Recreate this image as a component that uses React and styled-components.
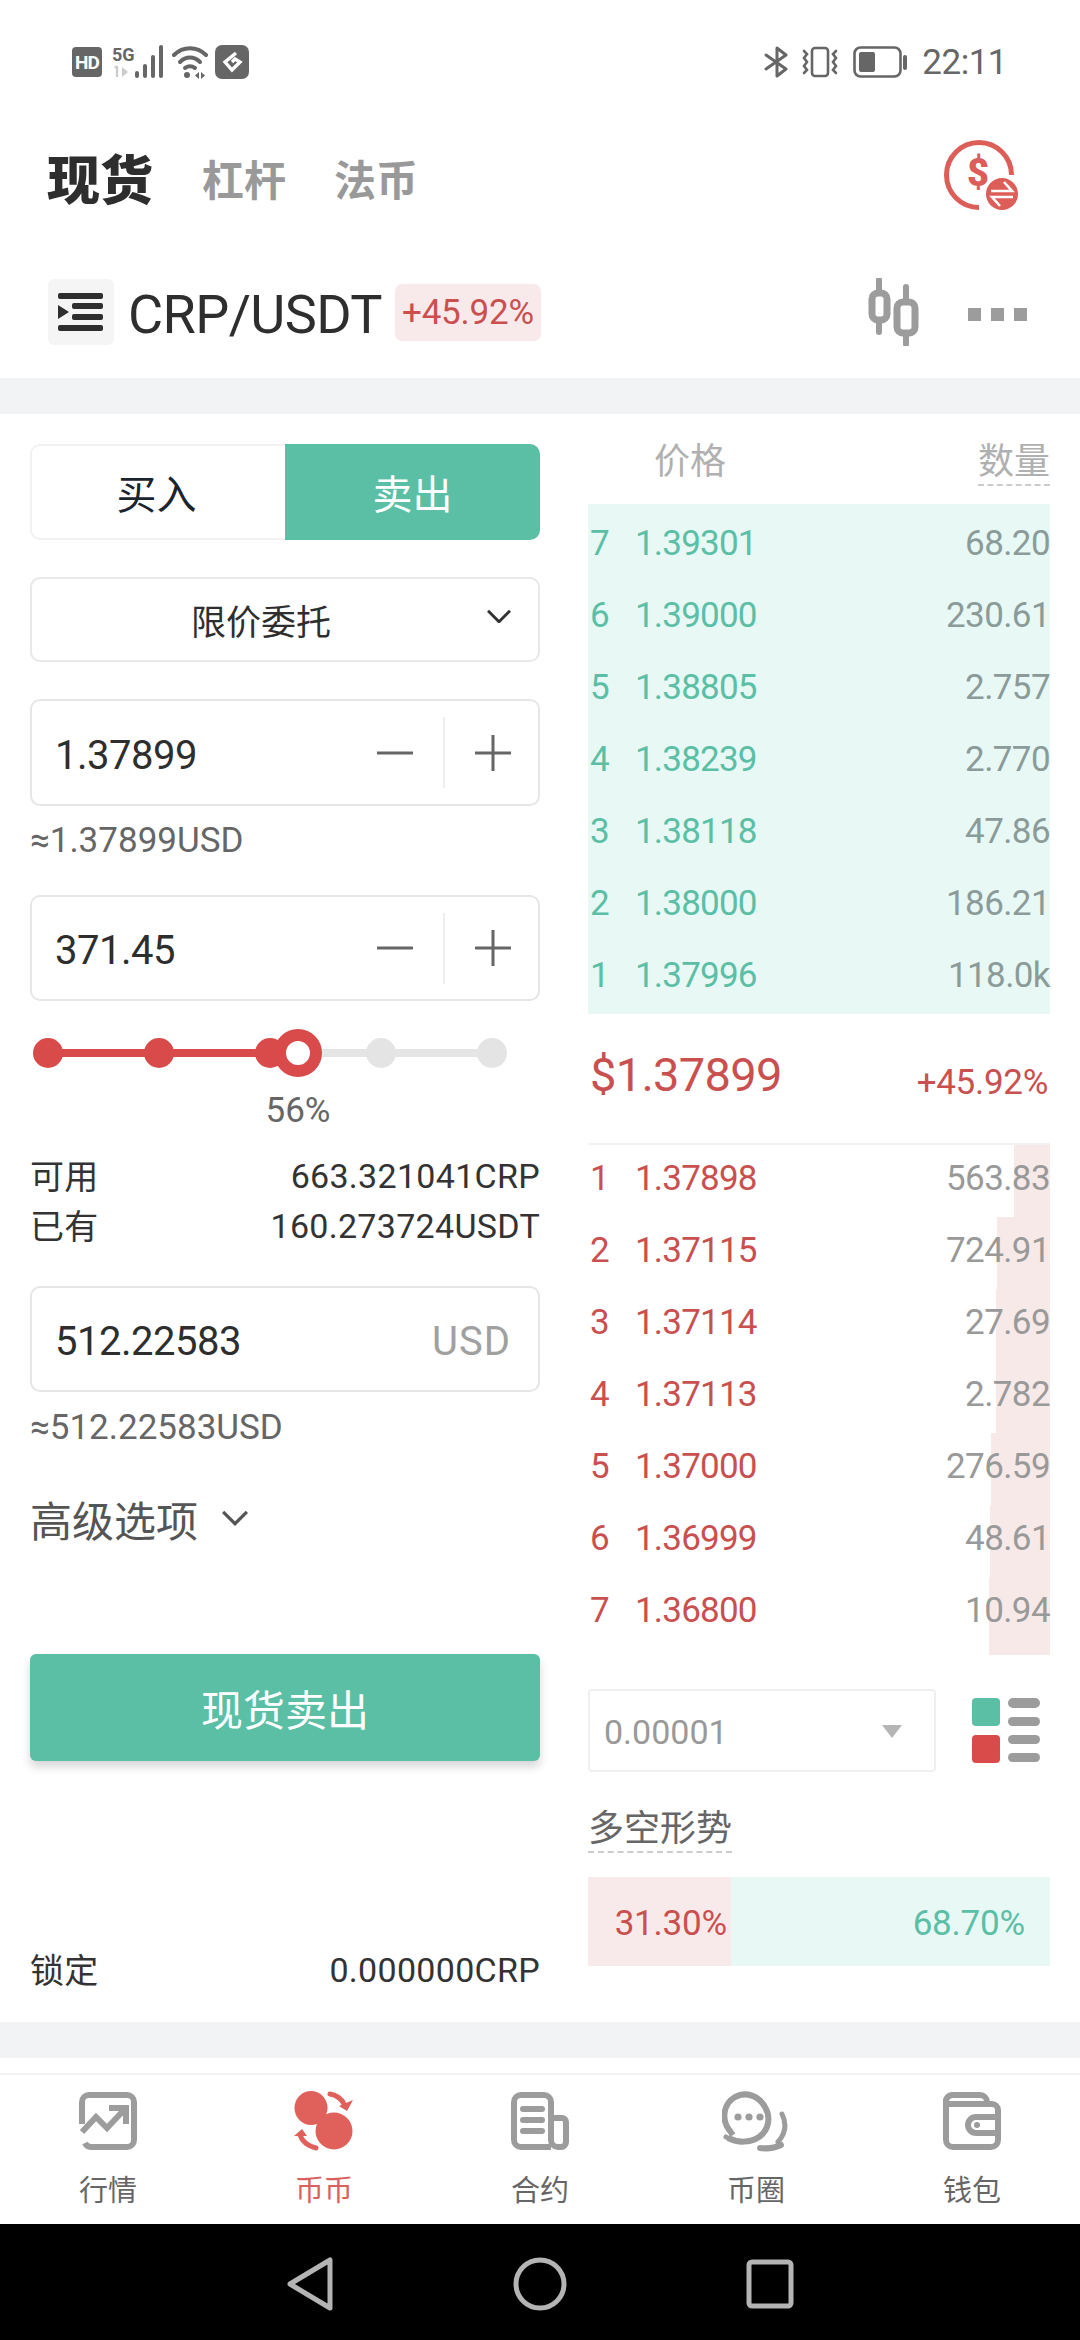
import React from 'react';
import styled, { createGlobalStyle } from 'styled-components';

const GREEN = '#5bbfa5';
const RED = '#c9504f';
const DOT_RED = '#d94a4a';

const GlobalStyle = createGlobalStyle`
    html, body { margin: 0; padding: 0; background: #fff; }
    * { box-sizing: border-box; }
    body { font-family: Roboto, "Noto Sans CJK SC", sans-serif; }
`;

const Page = styled.div`
    width: 1080px;
    height: 2340px;
    display: flex;
    flex-direction: column;
    overflow: hidden;
    background: #fff;
    color: #333;
`;

/* status bar */
const StatusBar = styled.div`
    height: 90px;
    padding: 44px 73px 0 72px;
    display: flex;
    justify-content: space-between;
    align-items: flex-start;
    flex: none;
`;
const StatusGroup = styled.div`
    display: flex;
    align-items: center;
    height: 36px;
`;
const StatusItem = styled.span`
    display: flex;
    margin-left: ${(p) => p.$ml}px;
`;
const HdBadge = styled.span`
    width: 30px;
    height: 30px;
    border-radius: 4px;
    background: #666;
    color: #fff;
    font-size: 19px;
    font-weight: 700;
    letter-spacing: -1px;
    display: flex;
    align-items: center;
    justify-content: center;
`;
const Clock = styled.span`
    font-size: 35px;
    letter-spacing: -0.5px;
    color: #666;
    margin-left: 15px;
`;

/* top tabs */
const TabsBar = styled.div`
    height: 174px;
    padding: 0 62px 0 47px;
    display: flex;
    align-items: center;
    flex: none;
`;
const MainTab = styled.span`
    font-size: 53px;
    font-weight: 900;
    color: #2e2e2e;
    margin-right: 49px;
`;
const SubTab = styled.span`
    font-size: 42px;
    font-weight: 700;
    color: #999;
    margin-right: 48px;
`;
const TabsIcon = styled.div`
    margin-left: auto;
    margin-bottom: 5px;
    display: flex;
`;

/* pair row */
const PairRow = styled.div`
    height: 114px;
    padding: 0 53px 18px 48px;
    display: flex;
    align-items: center;
    flex: none;
`;
const MenuBox = styled.div`
    width: 66px;
    height: 66px;
    border-radius: 6px;
    background: #f5f5f5;
    display: flex;
    align-items: center;
    justify-content: center;
`;
const PairName = styled.span`
    font-size: 54px;
    color: #2e2e2e;
    margin-left: 14px;
    padding-top: 4px;
    letter-spacing: -0.6px;
`;
const ChangeBadge = styled.span`
    height: 57px;
    width: 146px;
    margin-left: 13px;
    border-radius: 7px;
    background: #f8eaea;
    color: ${RED};
    font-size: 35px;
    letter-spacing: -0.2px;
    display: flex;
    align-items: center;
    justify-content: center;
`;
const PairActions = styled.div`
    margin-left: auto;
    display: flex;
    align-items: center;
    gap: 48px;
`;
const DotsRow = styled.div`
    display: flex;
    gap: 10px;
    margin-top: 4px;
`;
const SquareDot = styled.span`
    width: 13px;
    height: 13px;
    background: #9c9c9c;
`;

const Band = styled.div`
    height: 36px;
    background: #f2f3f5;
    flex: none;
`;

/* main area */
const Main = styled.div`
    height: 1608px;
    flex: none;
    padding: 0 30px;
    display: flex;
    gap: 48px;
`;
const LeftCol = styled.div`
    width: 510px;
    display: flex;
    flex-direction: column;
    padding: 30px 0 27px;
`;
const RightCol = styled.div`
    width: 462px;
    display: flex;
    flex-direction: column;
`;

const Toggle = styled.div`
    display: flex;
    height: 96px;
    flex: none;
`;
const ToggleBtn = styled.div`
    width: 50%;
    display: flex;
    align-items: center;
    justify-content: center;
    font-size: 40px;
    padding-right: ${(p) => (p.$active ? 0 : 4)}px;
    border: ${(p) => (p.$active ? 'none' : '2px solid #f1f1f1')};
    border-right: none;
    border-radius: ${(p) => (p.$active ? '0 10px 10px 0' : '10px 0 0 10px')};
    background: ${(p) => (p.$active ? GREEN : '#fff')};
    color: ${(p) => (p.$active ? '#fff' : '#1c2430')};
`;
const SelectBox = styled.div`
    height: 85px;
    margin-top: 37px;
    flex: none;
    position: relative;
    border: 2px solid #e8e8e8;
    border-radius: 10px;
    display: flex;
    align-items: center;
    justify-content: center;
    font-size: 35px;
    color: #2e2e2e;
    padding-right: 48px;
`;
const SelectChevron = styled.span`
    position: absolute;
    right: 27px;
    top: 30px;
    display: flex;
`;
const InputBox = styled.div`
    height: ${(p) => p.$h || 107}px;
    margin-top: ${(p) => p.$mt}px;
    flex: none;
    border: 2px solid #e6e6e6;
    border-radius: 10px;
    display: flex;
    align-items: center;
    padding: 0 27px 0 23px;
`;
const InputValue = styled.span`
    font-size: 40px;
    letter-spacing: -0.5px;
    color: #2e2e2e;
    flex: 1;
    padding-top: 5px;
`;
const InputSuffix = styled.span`
    font-size: 40px;
    letter-spacing: 1px;
    color: #a0a0a0;
    padding-top: 5px;
`;
const StepBtn = styled.span`
    width: 36px;
    height: 36px;
    display: flex;
`;
const StepDivider = styled.span`
    width: 2px;
    height: 71px;
    background: #eee;
    margin: 0 30px;
`;
const Hint = styled.div`
    font-size: 35px;
    line-height: 34px;
    color: #666;
    margin-top: ${(p) => p.$mt}px;
    flex: none;
`;

const Slider = styled.div`
    position: relative;
    height: 48px;
    margin-top: 28px;
    padding: 9px 33px 9px 3px;
    display: flex;
    justify-content: space-between;
    flex: none;
`;
const SliderTrack = styled.div`
    position: absolute;
    left: 18px;
    right: 48px;
    top: 20px;
    height: 8px;
    background: #e5e5e5;
`;
const SliderFill = styled.div`
    height: 100%;
    background: ${DOT_RED};
`;
const SliderDot = styled.span`
    position: relative;
    width: 30px;
    height: 30px;
    border-radius: 50%;
    background: ${(p) => (p.$on ? DOT_RED : '#e4e4e4')};
`;
const SliderThumb = styled.span`
    position: absolute;
    top: 0;
    width: 48px;
    height: 48px;
    margin-left: -24px;
    border-radius: 50%;
    border: 12px solid ${DOT_RED};
    background: #fff;
`;
const PercentLabel = styled.div`
    width: 536px;
    margin-top: 16px;
    text-align: center;
    font-size: 35px;
    line-height: 36px;
    color: #666;
    flex: none;
`;
const InfoRow = styled.div`
    display: flex;
    justify-content: space-between;
    align-items: center;
    height: 50px;
    font-size: 34px;
    letter-spacing: 0.3px;
    color: #333;
    flex: none;
`;
const InfoLabel = styled.span`
    margin-top: -3px;
`;
const InfoList = styled.div`
    margin-top: 22px;
`;
const Advanced = styled.div`
    margin-top: 48px;
    height: 50px;
    display: flex;
    align-items: center;
    gap: 24px;
    font-size: 42px;
    color: #555;
    flex: none;
`;
const SubmitBtn = styled.div`
    margin-top: 111px;
    height: 107px;
    flex: none;
    border-radius: 6px;
    background: ${GREEN};
    color: #fff;
    font-size: 42px;
    display: flex;
    align-items: center;
    justify-content: center;
    box-shadow: 0 6px 10px rgba(0, 0, 0, 0.16);
`;
const LockedRow = styled(InfoRow)`
    margin-top: auto;
`;

/* order book */
const BookHead = styled.div`
    height: 90px;
    flex: none;
    padding: 26px 0 0 66px;
    display: flex;
    justify-content: space-between;
    align-items: flex-start;
    font-size: 36px;
    line-height: 44px;
    color: #b0b0b0;
`;
const DashedLabel = styled.span`
    border-bottom: 2px dashed #ccc;
`;
const Asks = styled.div`
    height: 510px;
    padding: 3px 0;
    background: #e8f8f5;
    flex: none;
`;
const Bids = styled.div`
    height: 510px;
    padding-bottom: 6px;
    flex: none;
`;
const BookRow = styled.div`
    position: relative;
    height: 72px;
    display: flex;
    align-items: center;
    font-size: 35px;
    padding-bottom: ${(p) => (p.$side === 'bid' ? 6 : 0)}px;
    color: ${(p) => (p.$side === 'bid' ? RED : GREEN)};
`;
const DepthBar = styled.span`
    position: absolute;
    right: 0;
    top: 0;
    bottom: ${(p) => (p.$last ? -6 : 0)}px;
    background: #f7e9e8;
`;
const RowIndex = styled.span`
    width: 47px;
    padding-left: 2px;
    position: relative;
`;
const RowPrice = styled.span`
    position: relative;
    letter-spacing: -0.8px;
`;
const RowQty = styled.span`
    position: relative;
    margin-left: auto;
    letter-spacing: -0.6px;
    color: ${(p) => (p.$side === 'bid' ? '#999' : '#8b9b99')};
`;
const MidPrice = styled.div`
    height: 131px;
    flex: none;
    border-bottom: 2px solid #f2f2f2;
    display: flex;
    justify-content: space-between;
    align-items: center;
    color: ${RED};
    padding-bottom: 8px;
`;
const MidValue = styled.span`
    font-size: 47px;
    letter-spacing: -0.7px;
    padding-left: 2px;
`;
const MidChange = styled.span`
    font-size: 35px;
    letter-spacing: -0.3px;
    padding: 16px 2px 0 0;
`;
const DepthTools = styled.div`
    margin-top: 34px;
    display: flex;
    align-items: center;
    justify-content: space-between;
    padding-right: 10px;
    flex: none;
`;
const DepthSelect = styled.div`
    width: 348px;
    height: 83px;
    border: 2px solid #f0f0f0;
    border-radius: 4px;
    padding: 2px 32px 0 14px;
    display: flex;
    align-items: center;
    justify-content: space-between;
    font-size: 34px;
    color: #999;
`;
const Caret = styled.span`
    width: 0;
    height: 0;
    border-left: 10px solid transparent;
    border-right: 10px solid transparent;
    border-top: 13px solid #b5b5b5;
`;
const RatioTitleRow = styled.div`
    margin-top: 35px;
    display: flex;
    flex: none;
`;
const RatioTitle = styled.span`
    font-size: 36px;
    line-height: 44px;
    color: #666;
    border-bottom: 2px dashed #ccc;
`;
const RatioBar = styled.div`
    margin-top: 24px;
    height: 89px;
    display: flex;
    flex: none;
    font-size: 35px;
    letter-spacing: -0.2px;
`;
const RatioPart = styled.div`
    display: flex;
    align-items: center;
    justify-content: flex-end;
    background: ${(p) => (p.$long ? '#e8f8f5' : '#f8eaea')};
    color: ${(p) => (p.$long ? GREEN : RED)};
    padding: 4px ${(p) => (p.$long ? 25 : 4)}px 0 0;
`;

/* bottom nav */
const NavGap = styled.div`
    height: 15px;
    flex: none;
`;
const Nav = styled.div`
    height: 151px;
    flex: none;
    border-top: 2px solid #f2f2f2;
    display: grid;
    grid-template-columns: repeat(5, 1fr);
`;
const NavItem = styled.div`
    display: flex;
    flex-direction: column;
    align-items: center;
    padding-top: 15px;
    font-size: 29px;
    color: ${(p) => (p.$active ? '#d9605c' : '#666')};
`;
const NavIcon = styled.div`
    height: 62px;
    display: flex;
    align-items: center;
    margin-bottom: 17px;
`;
const NavLabel = styled.span`
    line-height: 44px;
`;
const SystemBar = styled.div`
    flex: 1;
    background: #000;
    display: flex;
    align-items: flex-start;
    justify-content: center;
    padding-top: 32px;
`;

/* drawings */
const SignalIcon = () => (
    <svg width="52" height="36" viewBox="0 0 52 36">
        <text x="0" y="17" fontSize="18" fontWeight="700" fill="#666" fontFamily="Roboto">5G</text>
        <path d="M5 22v11M3 24l2-2" fill="none" stroke="#ccc" strokeWidth="2.4" />
        <path d="M10 23l6 5-6 5z" fill="#ccc" />
        <g fill="#666">
            <rect x="23" y="27" width="4" height="7" rx="2" />
            <rect x="31" y="20" width="4" height="14" rx="2" />
            <rect x="39" y="11" width="4" height="23" rx="2" />
            <rect x="47" y="1" width="4" height="33" rx="2" />
        </g>
    </svg>
);

const WifiIcon = () => (
    <svg width="36" height="34" viewBox="0 0 36 34" fill="none" stroke="#666" strokeWidth="4" strokeLinecap="round">
        <path d="M2 10C11 1 25 1 34 10" />
        <path d="M8 17c6-6 14-6 20 0" />
        <path d="M13 23c3-2 7-2 10 0" />
        <circle cx="15" cy="30" r="3" fill="#666" stroke="none" />
        <path d="M27 27l-4 3.500 4 3.500zM29 27l4 3.500-4 3.500z" fill="#666" stroke="none" />
    </svg>
);

const AppGlyph = () => (
    <svg width="34" height="34" viewBox="0 0 34 34">
        <rect width="34" height="34" rx="7" fill="#666" />
        <path d="M21 8l-11 9 7 8 8-8-5-3-3 3" fill="none" stroke="#fff" strokeWidth="3.4" />
    </svg>
);

const BluetoothIcon = () => (
    <svg width="26" height="32" viewBox="0 0 26 32" fill="none" stroke="#666" strokeWidth="3" strokeLinejoin="round" strokeLinecap="round">
        <path d="M2 9l20 14-9 7V2l9 7L2 23" />
    </svg>
);

const VibrateIcon = () => (
    <svg width="40" height="32" viewBox="0 0 40 32" fill="none" stroke="#666" strokeWidth="2.6" strokeLinecap="round">
        <rect x="12" y="2" width="16" height="28" rx="3" />
        <path d="M4 5l3 3-3 4 3 4-3 4 3 4-3 3" />
        <path d="M36 5l-3 3 3 4-3 4 3 4-3 4 3 3" />
    </svg>
);

const BatteryIcon = () => (
    <svg width="54" height="32" viewBox="0 0 54 32">
        <rect x="1.5" y="1.5" width="46" height="29" rx="6" fill="none" stroke="#666" strokeWidth="2.6" />
        <rect x="6" y="6" width="16" height="20" rx="2" fill="#666" />
        <rect x="50" y="9" width="4" height="15" rx="2" fill="#666" />
    </svg>
);

const CoinSwapIcon = () => (
    <svg width="76" height="74" viewBox="0 0 76 74">
        <path d="M37 69.500A32.500 32.500 0 1 1 69.500 37" fill="none" stroke="#dd5d58" strokeWidth="5" />
        <text x="36" y="48" fontSize="38" fontWeight="900" fill="#dd5d58" fontFamily="Roboto" textAnchor="middle">$</text>
        <circle cx="60" cy="56" r="18" fill="#fff" />
        <circle cx="60" cy="56" r="16" fill="#dd5d58" />
        <path d="M49 53h21l-8-9M71 59H50l8 9" fill="none" stroke="#fff" strokeWidth="2.6" />
    </svg>
);

const MenuIcon = () => (
    <svg width="46" height="40" viewBox="0 0 46 40" fill="#2e2e2e">
        <rect x="0" y="1" width="45" height="6" rx="2" />
        <rect x="14" y="11" width="31" height="6" rx="2" />
        <rect x="14" y="22" width="31" height="6" rx="2" />
        <rect x="0" y="33" width="45" height="6" rx="2" />
        <path d="M0 13l11 7-11 7z" />
    </svg>
);

const CandleIcon = () => (
    <svg width="52" height="68" viewBox="0 0 52 68" fill="none" stroke="#9c9c9c">
        <path d="M11 2v52M38 9v57" strokeWidth="6" strokeLinecap="round" />
        <rect x="4" y="15" width="15" height="27" rx="6" fill="#fff" strokeWidth="7" />
        <rect x="29" y="24" width="18" height="31" rx="6" fill="#fff" strokeWidth="7" />
    </svg>
);

const ChevronIcon = ({ size, color }) => (
    <svg width={size} height={size * 0.6} viewBox="0 0 24 14" fill="none" stroke={color} strokeWidth="3">
        <path d="M1 1.500l11 11 11-11" />
    </svg>
);

const MinusIcon = () => (
    <svg width="36" height="36" viewBox="0 0 36 36" stroke="#666" strokeWidth="3">
        <path d="M0 18h36" />
    </svg>
);

const PlusIcon = () => (
    <svg width="36" height="36" viewBox="0 0 36 36" stroke="#666" strokeWidth="3">
        <path d="M0 18h36M18 0v36" />
    </svg>
);

const LayoutIcon = () => (
    <svg width="68" height="66" viewBox="0 0 68 66">
        <rect x="0" y="0" width="28" height="28" rx="4" fill={GREEN} />
        <rect x="0" y="37" width="28" height="28" rx="4" fill={DOT_RED} />
        <g fill="#9c9c9c">
            <rect x="36" y="0" width="32" height="10" rx="5" />
            <rect x="36" y="19" width="32" height="9" rx="4.500" />
            <rect x="36" y="37" width="32" height="9" rx="4.500" />
            <rect x="36" y="55" width="32" height="9" rx="4.500" />
        </g>
    </svg>
);

const ChartIcon = () => (
    <svg width="58" height="58" viewBox="0 0 58 58" fill="none" stroke="#9c9c9c" strokeWidth="6">
        <path d="M3 32V10a7 7 0 0 1 7-7h38a7 7 0 0 1 7 7v38a7 7 0 0 1-7 7H12a7 7 0 0 1-6-4" />
        <path d="M3 40l14-15 11 11 17-18" />
        <path d="M30 16h17v16" />
    </svg>
);

const CoinsIcon = () => (
    <svg width="60" height="60" viewBox="0 0 60 60" fill="#e0605b">
        <ellipse cx="17" cy="17" rx="16.500" ry="17" />
        <circle cx="40" cy="40" r="18.500" />
        <path d="M36 3c6 1 11 4 14 10" fill="none" stroke="#e0605b" strokeWidth="5" strokeLinecap="round" />
        <path d="M45 15l14-6-6 11z" />
        <path d="M6 44c2 6 8 11 16 13" fill="none" stroke="#e0605b" strokeWidth="5" strokeLinecap="round" />
        <path d="M0 45l8-7 5 7z" />
    </svg>
);

const ContractIcon = () => (
    <svg width="58" height="58" viewBox="0 0 58 58" fill="none" stroke="#9c9c9c" strokeWidth="6">
        <path d="M40 55H10a7 7 0 0 1-7-7V10a7 7 0 0 1 7-7h23a7 7 0 0 1 7 7v38a7 7 0 0 0 7 7h3a5 5 0 0 0 5-5V30a4 4 0 0 0-4-4H40" />
        <path d="M12 17h19M12 28h19M12 39h19" strokeLinecap="round" />
    </svg>
);

const ChatIcon = () => (
    <svg width="68" height="62" viewBox="0 0 68 62" fill="none" stroke="#9c9c9c">
        <path d="M6 48c10 5 22 5 31-1 10-7 12-20 6-30C37 6 24 1 13 7 1 14-1 30 8 41l3 4" strokeWidth="6" />
        <path d="M4 47c8 5 16 5 24 4" strokeWidth="5" strokeLinecap="round" />
        <circle cx="16" cy="27" r="3.600" fill="#9c9c9c" stroke="none" />
        <circle cx="27" cy="27" r="3.600" fill="#9c9c9c" stroke="none" />
        <circle cx="38" cy="27" r="3.600" fill="#9c9c9c" stroke="none" />
        <path d="M60 24c5 10 3 20-4 28" strokeWidth="5" strokeLinecap="round" />
        <path d="M38 58c8 1 15 0 21-3" strokeWidth="6" strokeLinecap="round" />
    </svg>
);

const WalletIcon = () => (
    <svg width="58" height="58" viewBox="0 0 58 58" fill="none" stroke="#9c9c9c" strokeWidth="6">
        <path d="M3 12v36a7 7 0 0 0 7 7h38a7 7 0 0 0 7-7V18a6 6 0 0 0-6-6H3a7 7 0 0 1 7-9h27a7 7 0 0 1 7 7v2" />
        <path d="M55 25H33a8 8 0 0 0 0 16h22" />
        <circle cx="34" cy="33" r="3" fill="#9c9c9c" stroke="none" />
    </svg>
);

const SystemIcons = () => (
    <svg width="510" height="56" viewBox="0 0 510 56" fill="none" stroke="#b4b4b4" strokeWidth="5" strokeLinejoin="round">
        <path d="M45 4v48L5 28z" />
        <circle cx="255" cy="28" r="24" />
        <rect x="464" y="6" width="42" height="44" rx="3" />
    </svg>
);

const asks = [
    [7, '1.39301', '68.20'],
    [6, '1.39000', '230.61'],
    [5, '1.38805', '2.757'],
    [4, '1.38239', '2.770'],
    [3, '1.38118', '47.86'],
    [2, '1.38000', '186.21'],
    [1, '1.37996', '118.0k'],
];

const bids = [
    [1, '1.37898', '563.83', 36],
    [2, '1.37115', '724.91', 53],
    [3, '1.37114', '27.69', 54],
    [4, '1.37113', '2.782', 54],
    [5, '1.37000', '276.59', 59],
    [6, '1.36999', '48.61', 60],
    [7, '1.36800', '10.94', 61],
];

const navItems = [
    ['行情', <ChartIcon />],
    ['币币', <CoinsIcon />, true],
    ['合约', <ContractIcon />],
    ['币圈', <ChatIcon />],
    ['钱包', <WalletIcon />],
];

const sliderPct = 56.3;

const App = () => {
    return (
        <Page>
            <GlobalStyle />
            <StatusBar>
                <StatusGroup>
                    <HdBadge>HD</HdBadge>
                    <StatusItem $ml={10}><SignalIcon /></StatusItem>
                    <StatusItem $ml={8}><WifiIcon /></StatusItem>
                    <StatusItem $ml={7}><AppGlyph /></StatusItem>
                </StatusGroup>
                <StatusGroup>
                    <BluetoothIcon />
                    <StatusItem $ml={10}><VibrateIcon /></StatusItem>
                    <StatusItem $ml={13}><BatteryIcon /></StatusItem>
                    <Clock>22:11</Clock>
                </StatusGroup>
            </StatusBar>

            <TabsBar>
                <MainTab>现货</MainTab>
                <SubTab>杠杆</SubTab>
                <SubTab>法币</SubTab>
                <TabsIcon><CoinSwapIcon /></TabsIcon>
            </TabsBar>

            <PairRow>
                <MenuBox><MenuIcon /></MenuBox>
                <PairName>CRP/USDT</PairName>
                <ChangeBadge>+45.92%</ChangeBadge>
                <PairActions>
                    <CandleIcon />
                    <DotsRow>
                        <SquareDot />
                        <SquareDot />
                        <SquareDot />
                    </DotsRow>
                </PairActions>
            </PairRow>

            <Band />

            <Main>
                <LeftCol>
                    <Toggle>
                        <ToggleBtn>买入</ToggleBtn>
                        <ToggleBtn $active>卖出</ToggleBtn>
                    </Toggle>
                    <SelectBox>
                        限价委托
                        <SelectChevron><ChevronIcon size={24} color="#333" /></SelectChevron>
                    </SelectBox>
                    <InputBox $mt={37}>
                        <InputValue>1.37899</InputValue>
                        <StepBtn><MinusIcon /></StepBtn>
                        <StepDivider />
                        <StepBtn><PlusIcon /></StepBtn>
                    </InputBox>
                    <Hint $mt={18}>≈1.37899USD</Hint>
                    <InputBox $mt={37} $h={106}>
                        <InputValue>371.45</InputValue>
                        <StepBtn><MinusIcon /></StepBtn>
                        <StepDivider />
                        <StepBtn><PlusIcon /></StepBtn>
                    </InputBox>
                    <Slider>
                        <SliderTrack>
                            <SliderFill style={{ width: `${sliderPct}%` }} />
                        </SliderTrack>
                        <SliderDot $on />
                        <SliderDot $on />
                        <SliderDot $on />
                        <SliderDot />
                        <SliderDot />
                        <SliderThumb style={{ left: `${18 + 4.44 * sliderPct}px` }} />
                    </Slider>
                    <PercentLabel>56%</PercentLabel>
                    <InfoList>
                        <InfoRow><InfoLabel>可用</InfoLabel><span>663.321041CRP</span></InfoRow>
                        <InfoRow><InfoLabel>已有</InfoLabel><span>160.273724USDT</span></InfoRow>
                    </InfoList>
                    <InputBox $mt={35} $h={106}>
                        <InputValue>512.22583</InputValue>
                        <InputSuffix>USD</InputSuffix>
                    </InputBox>
                    <Hint $mt={19}>≈512.22583USD</Hint>
                    <Advanced>
                        高级选项
                        <ChevronIcon size={26} color="#555" />
                    </Advanced>
                    <SubmitBtn>现货卖出</SubmitBtn>
                    <LockedRow><InfoLabel>锁定</InfoLabel><span>0.000000CRP</span></LockedRow>
                </LeftCol>

                <RightCol>
                    <BookHead>
                        <span>价格</span>
                        <DashedLabel>数量</DashedLabel>
                    </BookHead>
                    <Asks>
                        {asks.map(([idx, price, qty]) => (
                            <BookRow key={idx} $side="ask">
                                <RowIndex>{idx}</RowIndex>
                                <RowPrice>{price}</RowPrice>
                                <RowQty $side="ask">{qty}</RowQty>
                            </BookRow>
                        ))}
                    </Asks>
                    <MidPrice>
                        <MidValue>$1.37899</MidValue>
                        <MidChange>+45.92%</MidChange>
                    </MidPrice>
                    <Bids>
                        {bids.map(([idx, price, qty, depth]) => (
                            <BookRow key={idx} $side="bid">
                                <DepthBar $last={idx === 7} style={{ width: depth }} />
                                <RowIndex>{idx}</RowIndex>
                                <RowPrice>{price}</RowPrice>
                                <RowQty $side="bid">{qty}</RowQty>
                            </BookRow>
                        ))}
                    </Bids>
                    <DepthTools>
                        <DepthSelect>
                            0.00001
                            <Caret />
                        </DepthSelect>
                        <LayoutIcon />
                    </DepthTools>
                    <RatioTitleRow>
                        <RatioTitle>多空形势</RatioTitle>
                    </RatioTitleRow>
                    <RatioBar>
                        <RatioPart style={{ width: 143 }}>31.30%</RatioPart>
                        <RatioPart $long style={{ width: 319 }}>68.70%</RatioPart>
                    </RatioBar>
                </RightCol>
            </Main>

            <Band />
            <NavGap />

            <Nav>
                {navItems.map(([label, icon, active]) => (
                    <NavItem key={label} $active={active}>
                        <NavIcon>{icon}</NavIcon>
                        <NavLabel>{label}</NavLabel>
                    </NavItem>
                ))}
            </Nav>

            <SystemBar>
                <SystemIcons />
            </SystemBar>
        </Page>
    );
};

export default App;
